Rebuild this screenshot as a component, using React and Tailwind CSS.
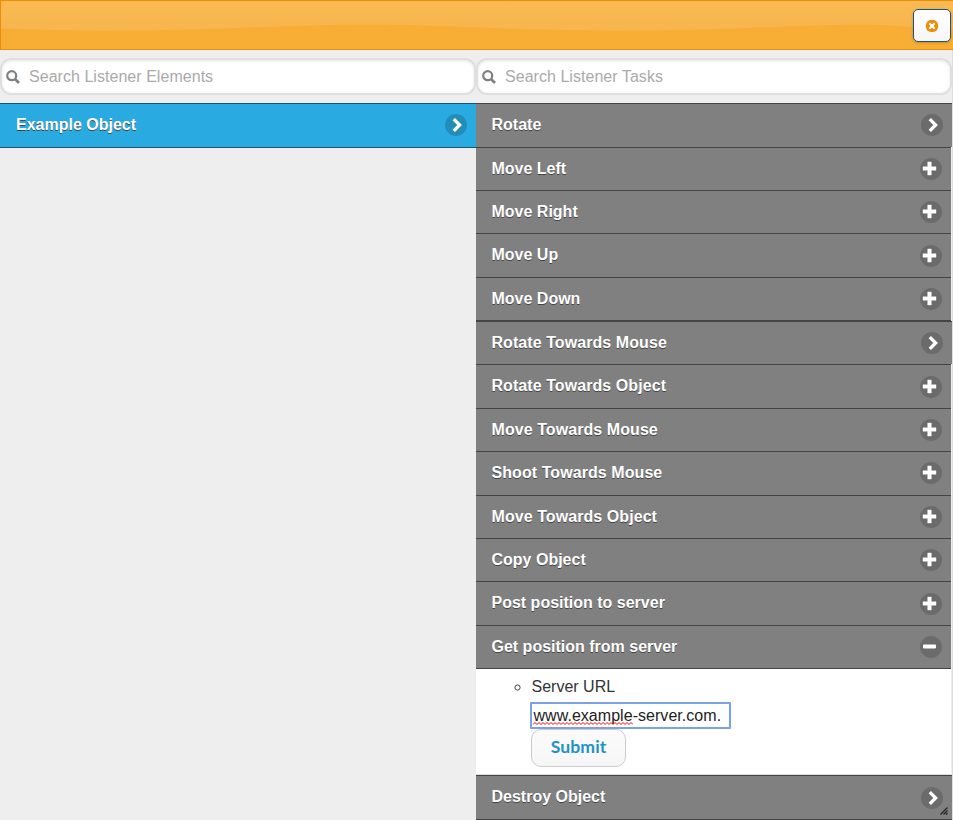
const tasks = [
  { label: 'Rotate', icon: 'arrow', h: 'h-[44px]' },
  { label: 'Move Left', icon: 'plus', h: 'h-[43px]' },
  { label: 'Move Right', icon: 'plus', h: 'h-[43px]' },
  { label: 'Move Up', icon: 'plus', h: 'h-[44px]', low: true },
  { label: 'Move Down', icon: 'plus', h: 'h-[44px]', last: true },
  { label: 'Rotate Towards Mouse', icon: 'arrow', h: 'h-[43px]', wide: true },
  { label: 'Rotate Towards Object', icon: 'plus', h: 'h-[44px]', low: true, wide: true },
  { label: 'Move Towards Mouse', icon: 'plus', h: 'h-[43px]', wide: true },
  { label: 'Shoot Towards Mouse', icon: 'plus', h: 'h-[44px]', wide: true },
  { label: 'Move Towards Object', icon: 'plus', h: 'h-[43px]', wide: true },
  { label: 'Copy Object', icon: 'plus', h: 'h-[43px]' },
  { label: 'Post position to server', icon: 'plus', h: 'h-[44px]', low: true },
  { label: 'Get position from server', icon: 'minus', h: 'h-[44px]', last: true },
];

function RoundIcon({ type, fill = '#6b6b6b' }) {
  return (
    <svg width="22" height="22" viewBox="0 0 22 22" className="block shrink-0">
      <circle cx="11" cy="11" r="11" fill={fill} />
      {type === 'arrow' && (
        <path d="M8.8 5.2 L14.6 11 L8.8 16.8" fill="none" stroke="#fff" strokeWidth="3.3" />
      )}
      {type === 'plus' && (
        <path
          d="M7.7 4h3.6v4.7h4.7v3.6h-4.7v4.7h-3.6v-4.7h-4.7v-3.6h4.7z"
          fill="#fff"
          stroke="#fff"
          strokeWidth="0.4"
          strokeLinejoin="round"
        />
      )}
      {type === 'minus' && <rect x="3" y="8.6" width="13" height="3.8" rx="0.8" fill="#fff" />}
    </svg>
  );
}

function TaskRow({ label, icon, h, low, last, wide }) {
  return (
    <div
      className={`flex items-start justify-between border-t border-[#444] bg-[#808080] pr-[9px] pl-[15.5px] ${h} ${
        icon === 'arrow' ? 'w-[476px]' : 'w-[475px]'
      } ${last ? 'border-b' : ''}`}
    >
      <span
        className={`mt-[10px] text-[16px] leading-[21px] font-bold text-white [text-shadow:0_1px_0_#444] ${
          wide ? 'tracking-[0.07px]' : ''
        }`}
      >
        {label}
      </span>
      <span className={low ? 'mt-[11px]' : 'mt-[10px]'}>
        <RoundIcon type={icon} />
      </span>
    </div>
  );
}

function Search({ text }) {
  return (
    <div className="flex h-[37px] w-[476px] items-center rounded-[11px] border-2 border-[#dfdfdf] bg-white pl-[4px] shadow-[inset_0_1px_3px_rgba(0,0,0,0.1)]">
      <svg width="14" height="14" viewBox="0 0 14 14" className="block">
        <circle cx="5.7" cy="5.7" r="4.5" fill="none" stroke="#808080" strokeWidth="2.2" />
        <path d="M9 9 L13 13" stroke="#808080" strokeWidth="2.6" />
      </svg>
      <span className="ml-[9px] text-[16px] leading-[20px] tracking-[0.04px] text-[#aaa]">{text}</span>
    </div>
  );
}

export default function App() {
  return (
    <div
      className="flex h-[820px] w-[953px] flex-col overflow-hidden bg-[#eee]"
      style={{ fontFamily: '"Liberation Sans", Arial, sans-serif' }}
    >
      <header className="relative h-[50px] shrink-0 border border-r-0 border-[#e78f08] bg-[#f6a828]">
        <svg width="952" height="48" viewBox="0 0 952 48" className="block">
          <defs>
            <linearGradient id="base" x1="0" y1="0" x2="0" y2="1">
              <stop offset="0" stopColor="#fab951" />
              <stop offset="1" stopColor="#f6b54d" />
            </linearGradient>
          </defs>
          <rect width="952" height="48" fill="#f8ae34" />
          <path
            d="M0 0H952V28.5C930 27.5 890 23.5 865 23.5C790 23.5 740 29.5 610 29.5C500 29.5 450 23.5 365 23.5C290 23.5 220 29.5 110 29.5C70 29.5 30 28.5 0 27.5Z"
            fill="url(#base)"
          />
        </svg>
        <button className="absolute top-[8px] left-[912px] flex h-[33px] w-[38px] items-center justify-center rounded-[5px] border border-[#155678] bg-gradient-to-b from-white to-[#f6f6f6] shadow-[0_1px_3px_rgba(0,0,0,0.2)]">
          <svg width="12" height="12" viewBox="0 0 12 12">
            <rect width="12" height="12" rx="5" fill="#ef8c08" />
            <path d="M3.3 3.3L8.7 8.7M8.7 3.3L3.3 8.7" stroke="#fff" strokeWidth="2" />
          </svg>
        </button>
      </header>

      <main className="flex grow">
        <section className="flex w-[476px] flex-col pt-[8px]">
          <Search text="Search Listener Elements" />
          <div className="mt-[8px] flex h-[45px] items-start justify-between border-y border-[#155678] bg-[#29abe2] pr-[9px] pl-[16px]">
            <span className="mt-[10px] text-[16px] leading-[21px] font-bold text-white [text-shadow:0_1px_0_#444]">
              Example Object
            </span>
            <span className="mt-[10px]">
              <RoundIcon type="arrow" fill="#238dba" />
            </span>
          </div>
        </section>

        <section className="flex w-[477px] flex-col border-r border-[#ddd] pt-[8px]">
          <Search text="Search Listener Tasks" />
          <div className="mt-[8px] flex flex-col">
            {tasks.map((t) => (
              <TaskRow key={t.label} {...t} />
            ))}
          </div>

          <div className="flex h-[106px] w-[475px] flex-col items-start border-b border-[#ddd] bg-white pl-[54px]">
            <div className="-ml-[16px] flex items-center pt-[8px]">
              <svg width="7" height="7" viewBox="0 0 7 7" className="mr-[10.5px]">
                <circle cx="3.5" cy="3.5" r="2.6" fill="none" stroke="#444" strokeWidth="1" />
              </svg>
              <span className="text-[16px] leading-[20px] text-[#333]">Server URL</span>
            </div>
            <div className="relative mt-[5px] flex h-[27px] w-[201px] items-center rounded-[1px] border-2 border-[#7ba2e7] bg-white pl-[1.5px] text-[16px] leading-[20px] tracking-[0.04px] text-[#222]">
              www.example-server.com.
              <svg width="100" height="3" viewBox="0 0 100 3" className="absolute top-[18px] left-px">
                <path
                  d={'M0 2.5' + Array.from({ length: 25 }, () => 'l2 -2l2 2').join('')}
                  fill="none"
                  stroke="#f00"
                  strokeWidth="1"
                />
              </svg>
            </div>
            <button
              className="ml-px flex h-[38px] w-[95px] items-center justify-center rounded-[10px] border border-[#ccc] bg-gradient-to-b from-[#fbfbfb] to-[#f6f6f6] pb-px text-[17.6px] tracking-[0.1px] font-bold text-[#1c94c4]"
              style={{ fontFamily: '"Trebuchet MS", Lato, sans-serif' }}
            >
              Submit
            </button>
          </div>

          <div className="relative flex h-[45px] w-[476px] items-start justify-between border-y border-[#444] bg-[#808080] pr-[9px] pl-[15.5px]">
            <span className="mt-[10px] text-[16px] leading-[21px] font-bold text-white [text-shadow:0_1px_0_#444]">
              Destroy Object
            </span>
            <span className="mt-[11px]">
              <RoundIcon type="arrow" />
            </span>
            <svg width="8" height="8" viewBox="0 0 8 8" className="absolute right-[4px] bottom-[4px]">
              <path d="M0.5 7.5L7.5 0.5M3.5 7.5L7.5 3.5M6 7.5L7.5 6" stroke="#222" strokeWidth="1.1" />
            </svg>
          </div>
        </section>
      </main>
    </div>
  );
}
